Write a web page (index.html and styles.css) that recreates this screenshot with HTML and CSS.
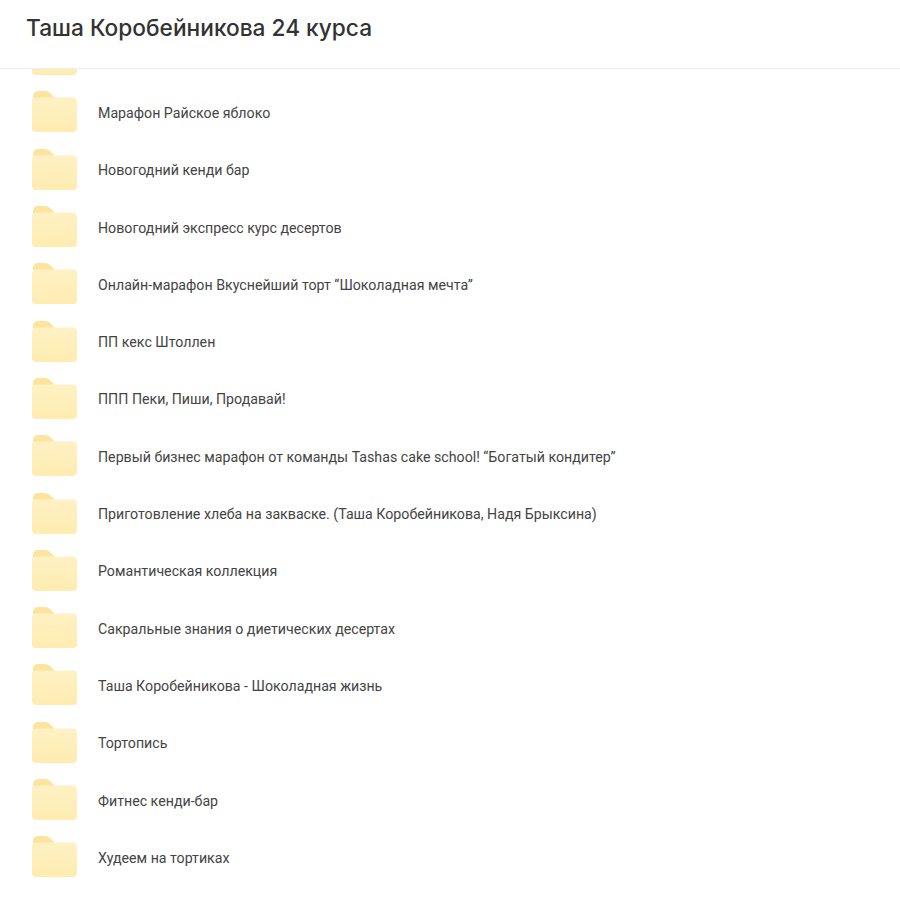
FILE: index.html
```html
<!DOCTYPE html>
<html lang="ru">
<head>
    <meta charset="UTF-8">
    <meta name="viewport" content="width=device-width, initial-scale=1.0">
    <title>Таша Коробейникова 24 курса</title>
    <link rel="stylesheet" href="styles.css">
</head>
<body>
    <svg class="sprite" width="0" height="0">
        <defs>
            <linearGradient id="folderBody" x1="0" y1="0" x2="0" y2="1">
                <stop offset="0" stop-color="#fff1c4"/>
                <stop offset="1" stop-color="#feecb0"/>
            </linearGradient>
        </defs>
        <symbol id="folder" viewBox="0 0 45 41">
            <path d="M1 5a5 5 0 0 1 5-5h7c2.500 0 4 1 6 3l4 4v6H1z" fill="#fce49c"/>
            <rect x="0" y="6.500" width="45" height="34.500" rx="4" fill="url(#folderBody)"/>
        </symbol>
    </svg>
    <header class="header">
        <h1>Таша Коробейникова 24 курса</h1>
    </header>
    <main class="list">
        <div class="row row-cut"><svg class="folder"><use href="#folder"/></svg></div>
        <div class="row"><svg class="folder"><use href="#folder"/></svg><span>Марафон Райское яблоко</span></div>
        <div class="row"><svg class="folder"><use href="#folder"/></svg><span>Новогодний кенди бар</span></div>
        <div class="row"><svg class="folder"><use href="#folder"/></svg><span>Новогодний экспресс курс десертов</span></div>
        <div class="row"><svg class="folder"><use href="#folder"/></svg><span>Онлайн-марафон Вкуснейший торт “Шоколадная мечта”</span></div>
        <div class="row"><svg class="folder"><use href="#folder"/></svg><span>ПП кекс Штоллен</span></div>
        <div class="row"><svg class="folder"><use href="#folder"/></svg><span>ППП Пеки, Пиши, Продавай!</span></div>
        <div class="row"><svg class="folder"><use href="#folder"/></svg><span>Первый бизнес марафон от команды Tashas cake school! “Богатый кондитер”</span></div>
        <div class="row"><svg class="folder"><use href="#folder"/></svg><span>Приготовление хлеба на закваске. (Таша Коробейникова, Надя Брыксина)</span></div>
        <div class="row"><svg class="folder"><use href="#folder"/></svg><span>Романтическая коллекция</span></div>
        <div class="row"><svg class="folder"><use href="#folder"/></svg><span>Сакральные знания о диетических десертах</span></div>
        <div class="row"><svg class="folder"><use href="#folder"/></svg><span>Таша Коробейникова - Шоколадная жизнь</span></div>
        <div class="row"><svg class="folder"><use href="#folder"/></svg><span>Тортопись</span></div>
        <div class="row"><svg class="folder"><use href="#folder"/></svg><span>Фитнес кенди-бар</span></div>
        <div class="row"><svg class="folder"><use href="#folder"/></svg><span>Худеем на тортиках</span></div>
    </main>
</body>
</html>
```

FILE: styles.css
```css
body {
    margin: 0;
    height: 897px;
    overflow: hidden;
    background-color: #fff;
    color: #444;
    font-family: Roboto, Arial, sans-serif;
}
.sprite {
    position: absolute;
}
.header {
    height: 54px;
    padding: 0 0 14px 26px;
    display: flex;
    align-items: center;
    border-bottom: 1px solid #eee;
}
.header h1 {
    margin: 0;
    font-family: Inter, Arial, sans-serif;
    font-size: 22.7px;
    font-weight: 500;
    color: #333;
}
.list {
    height: 828px;
    overflow: hidden;
}
.row {
    height: 57.3px;
    padding-left: 32px;
    display: flex;
    align-items: center;
    gap: 21px;
    font-size: 14.2px;
}
.row span {
    padding-top: 2px;
}
.row-cut {
    margin-top: -43px;
}
.folder {
    width: 45px;
    height: 41px;
    flex-shrink: 0;
}
```
